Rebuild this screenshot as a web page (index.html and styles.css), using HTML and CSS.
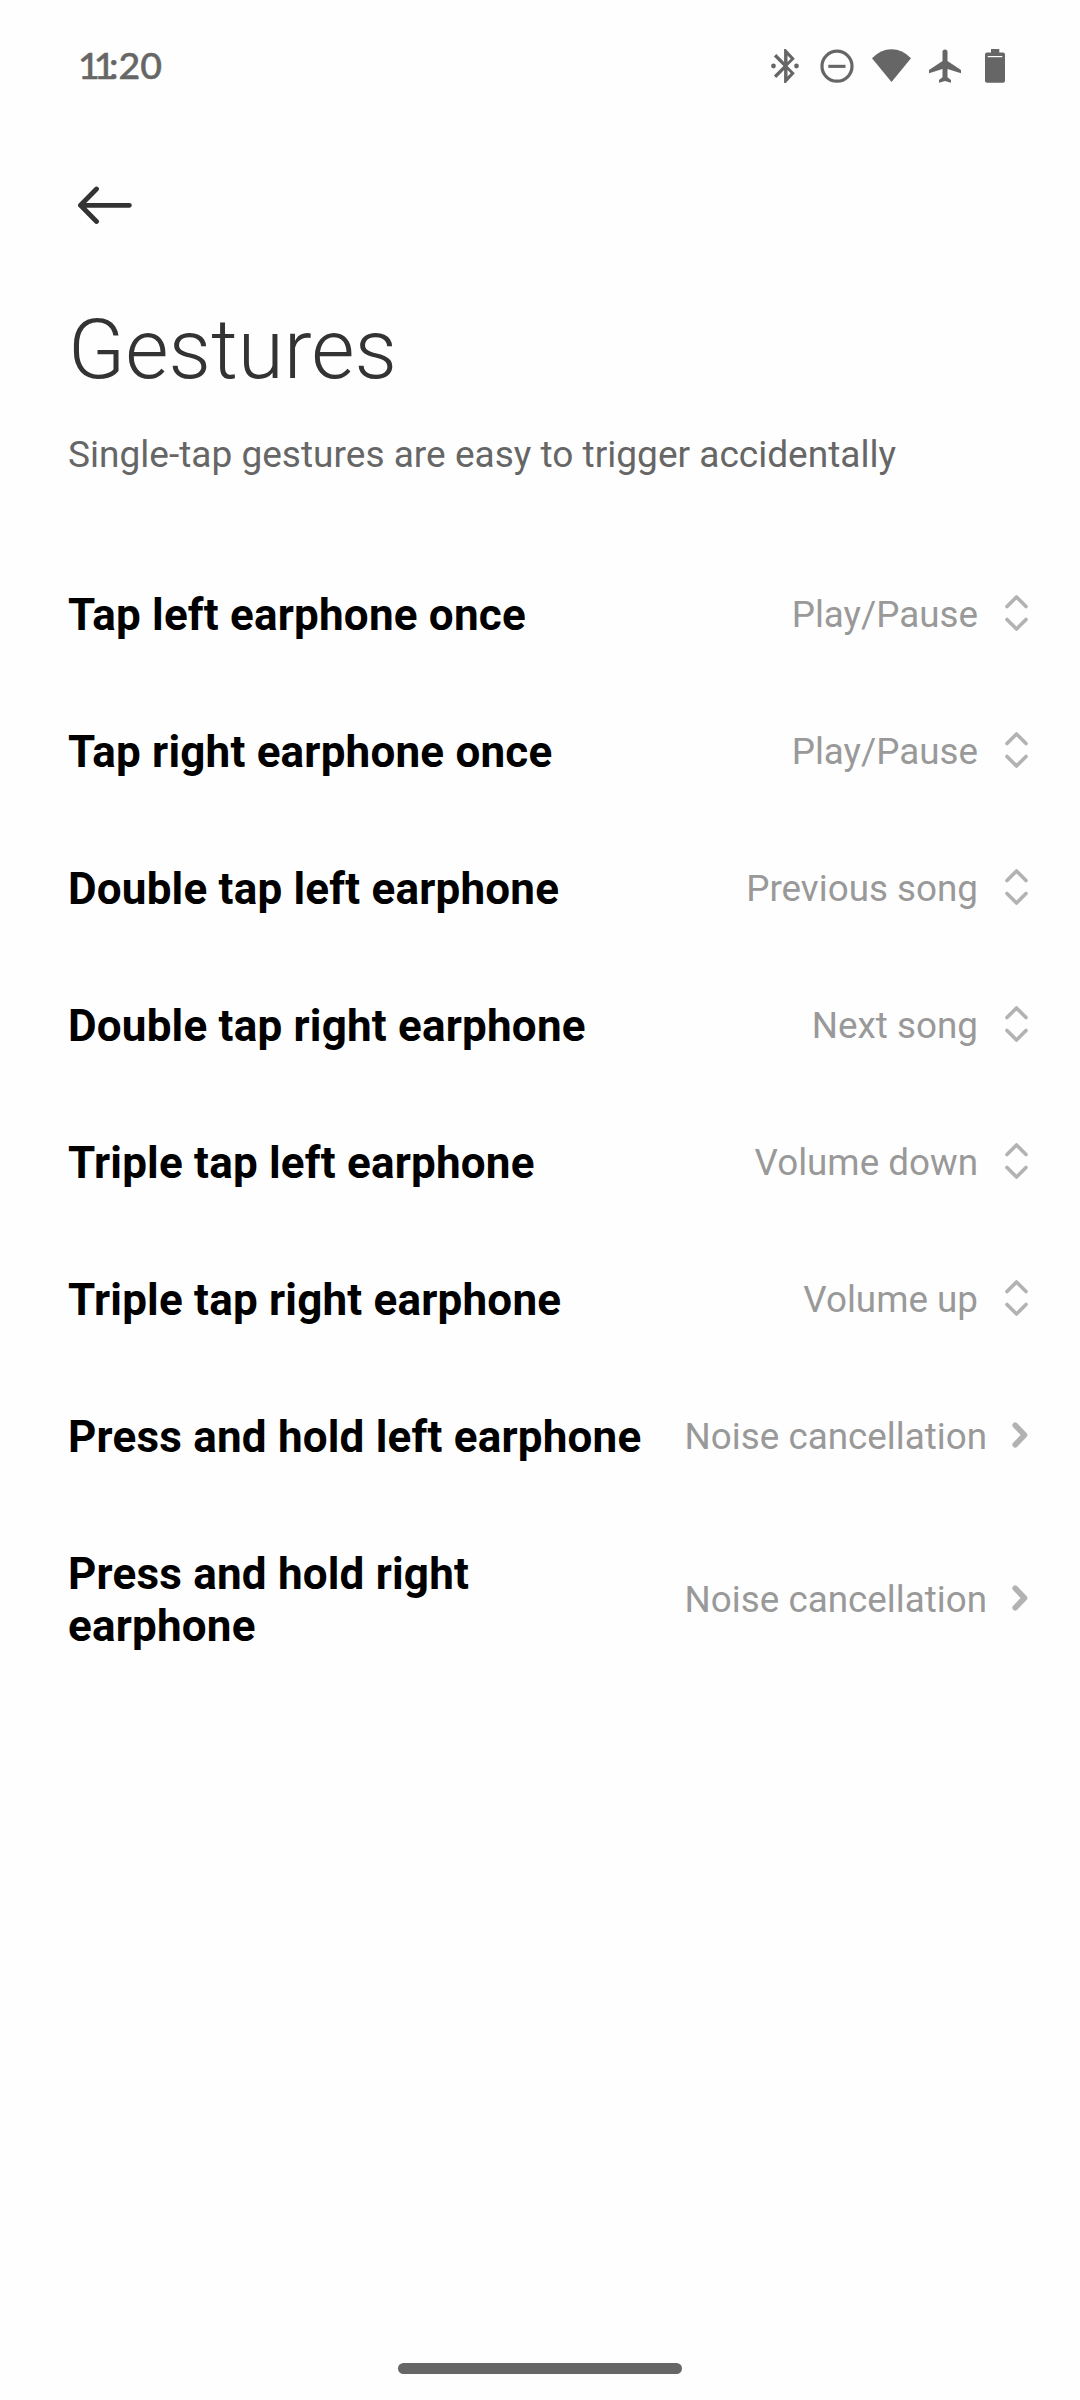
FILE: index.html
```
<!DOCTYPE html>
<html lang="en">
<head>
    <meta charset="UTF-8">
    <meta name="viewport" content="width=device-width, initial-scale=1.0">
    <title>Gestures</title>
    <link rel="stylesheet" href="styles.css">
</head>
<body>
    <div class="screen">
        <div class="status-bar">
            <div class="clock"><span class="one">1</span><span class="last-one">1</span>:20</div>
            <div class="status-icons">
                <svg class="icon-bluetooth" width="30" height="34" viewBox="3.3 2 17.65 20">
                    <path d="M17.3 7.7L12 2h-1v7.59L6.41 5 5 6.41 10.59 12 5 17.59 6.41 19 11 14.41V22h1l5.3-5.7-4.3-4.3zM13 5.83l1.88 1.88L13 9.59zm1.88 10.46L13 18.17v-3.76z"/>
                    <circle cx="4.75" cy="12" r="1.4"/>
                    <circle cx="18.3" cy="12" r="1.4"/>
                </svg>
                <svg class="icon-dnd" width="34" height="34" viewBox="0 0 34 34">
                    <circle cx="17" cy="17.2" r="15" fill="none" stroke="#666" stroke-width="3.2"/>
                    <rect x="8.3" y="15.8" width="17.2" height="3.1"/>
                </svg>
                <svg class="icon-wifi" width="39" height="34" viewBox="0 0 39 34">
                    <path d="M0 9.2Q8.5 0.2 19.5 0.2T39 9.2L19.5 33z"/>
                </svg>
                <svg class="icon-plane" width="32" height="34" viewBox="0 0 32 34">
                    <path d="M13.5 12V2.9a2.5 2.5 0 0 1 5 0V12L32 21v3.2L18.5 20v8.3l3.5 2.6v2.8L16 32l-6 1.7v-2.8l3.5-2.6V20L0 24.2V21z"/>
                </svg>
                <svg class="icon-battery" width="20" height="34" viewBox="0 0 20 34">
                    <path d="M6 0h8.3v3.5H18a2 2 0 0 1 2 2V31.7a2 2 0 0 1-2 2H2a2 2 0 0 1-2-2V5.5a2 2 0 0 1 2-2h4z"/>
                    <rect x="2.7" y="7" width="14.6" height="1.2" fill="#fefefe"/>
                </svg>
            </div>
        </div>

        <div class="toolbar">
            <svg class="back" width="54" height="38" viewBox="0 0 54 38">
                <path d="M18.5 3L2.5 19.3L18.5 35.5M3 19.3H51.4"/>
            </svg>
        </div>

        <h1 class="title">Gestures</h1>
        <p class="subtitle">Single-tap gestures are easy to trigger accidentally</p>

        <div class="settings">
            <div class="row">
                <div class="label">Tap left earphone once</div>
                <div class="value">Play/Pause</div>
                <svg class="updown" width="23" height="36" viewBox="0 0 23 36"><path d="M2 11.5L11.5 2L21 11.5M2 24.5L11.5 34L21 24.5"/></svg>
            </div>
            <div class="row">
                <div class="label">Tap right earphone once</div>
                <div class="value">Play/Pause</div>
                <svg class="updown" width="23" height="36" viewBox="0 0 23 36"><path d="M2 11.5L11.5 2L21 11.5M2 24.5L11.5 34L21 24.5"/></svg>
            </div>
            <div class="row">
                <div class="label">Double tap left earphone</div>
                <div class="value">Previous song</div>
                <svg class="updown" width="23" height="36" viewBox="0 0 23 36"><path d="M2 11.5L11.5 2L21 11.5M2 24.5L11.5 34L21 24.5"/></svg>
            </div>
            <div class="row">
                <div class="label">Double tap right earphone</div>
                <div class="value">Next song</div>
                <svg class="updown" width="23" height="36" viewBox="0 0 23 36"><path d="M2 11.5L11.5 2L21 11.5M2 24.5L11.5 34L21 24.5"/></svg>
            </div>
            <div class="row">
                <div class="label">Triple tap left earphone</div>
                <div class="value">Volume down</div>
                <svg class="updown" width="23" height="36" viewBox="0 0 23 36"><path d="M2 11.5L11.5 2L21 11.5M2 24.5L11.5 34L21 24.5"/></svg>
            </div>
            <div class="row">
                <div class="label">Triple tap right earphone</div>
                <div class="value">Volume up</div>
                <svg class="updown" width="23" height="36" viewBox="0 0 23 36"><path d="M2 11.5L11.5 2L21 11.5M2 24.5L11.5 34L21 24.5"/></svg>
            </div>
            <div class="row">
                <div class="label">Press and hold left earphone</div>
                <div class="value">Noise cancellation</div>
                <svg class="chevron" width="16" height="26" viewBox="0 0 16 26"><path d="M3.2 3.3L12.5 13L3.2 22.7"/></svg>
            </div>
            <div class="row">
                <div class="label">Press and hold right earphone</div>
                <div class="value">Noise cancellation</div>
                <svg class="chevron" width="16" height="26" viewBox="0 0 16 26"><path d="M3.2 3.3L12.5 13L3.2 22.7"/></svg>
            </div>
        </div>

        <div class="home-bar"></div>
    </div>
</body>
</html>
```

FILE: styles.css
```
* {
    box-sizing: border-box;
}

body {
    margin: 0;
    background: #fefefe;
    font-family: Roboto, sans-serif;
}

.screen {
    width: 1080px;
    height: 2400px;
    display: flex;
    flex-direction: column;
}

.status-bar {
    height: 132px;
    padding: 0 75px 0 78px;
    display: flex;
    justify-content: space-between;
    align-items: center;
}

.clock {
    padding-bottom: 3px;
    font-family: Lato, sans-serif;
    font-size: 37.5px;
    font-weight: 500;
    color: #666;
    -webkit-text-stroke: 0.5px #666;
}

.clock .one {
    letter-spacing: -6px;
}

.clock .last-one {
    letter-spacing: -6.4px;
}

.status-icons {
    display: flex;
    fill: #666;
}

.icon-dnd {
    margin-left: 19px;
}

.icon-wifi {
    margin-left: 18px;
}

.icon-plane {
    margin-left: 18px;
}

.icon-battery {
    margin-left: 24px;
}

.toolbar {
    height: 146px;
    padding: 54px 78px 0;
}

.back {
    display: block;
    fill: none;
    stroke: #333;
    stroke-width: 4.8;
    stroke-linecap: round;
    stroke-linejoin: round;
}

.title {
    margin: 0;
    padding: 21px 68px 0;
    font-size: 83.7px;
    font-weight: 300;
    line-height: 100px;
    color: #333;
}

.subtitle {
    margin: 0;
    padding: 33px 68px 0;
    font-size: 37.05px;
    line-height: 46px;
    color: #666;
}

.settings {
    padding: 69px 52px 0 68px;
}

.row {
    display: flex;
    align-items: center;
    padding: 42px 0 43px;
}

.label {
    flex: 1;
    font-size: 44px;
    font-weight: 700;
    line-height: 52px;
    letter-spacing: 0.2px;
    color: #000;
}

.value {
    margin-left: 28px;
    font-size: 36.8px;
    line-height: 46px;
    color: #999;
    white-space: nowrap;
}

.updown,
.chevron {
    fill: none;
    stroke: #b2b2b2;
    stroke-width: 3.6;
    stroke-linecap: round;
    stroke-linejoin: round;
    margin: 0 0 5px 27px;
}

.chevron {
    margin-left: 25px;
    stroke-width: 5.6;
}

.home-bar {
    width: 284px;
    height: 11px;
    margin: auto auto 26px;
    border-radius: 6px;
    background: #666;
}
```
